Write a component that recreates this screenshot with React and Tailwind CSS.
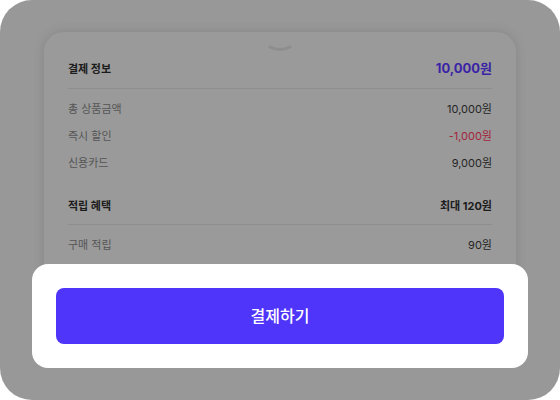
export default function App() {
  const font = { fontFamily: '"Inter", "Noto Sans CJK KR", sans-serif' };
  const Row = ({ label, value, valueClass = "text-[#262626]" }) => (
    <div className="flex h-[27px] items-center justify-between">
      <span className="text-[11px] text-[#555555]">{label}</span>
      <span className={"text-[11px] " + valueClass}>{value}</span>
    </div>
  );
  return (
    <div className="w-[560px] h-[400px] bg-white" style={font}>
      <div className="relative h-full overflow-hidden rounded-[32px] bg-[#989898] px-[44px] pt-[32px]">
        <div className="h-[300px] rounded-[20px] bg-[#9a9a9a] px-6 shadow-[0_0_12px_rgba(0,0,0,0.12)]">
          <div className="flex h-[22px] items-end justify-center">
            <svg width="24" height="8" viewBox="0 0 24 8" className="mb-[1px]">
              <path d="M2 2 Q12 7 22 2" stroke="#8d8d8d" strokeWidth="3" fill="none" strokeLinecap="round" />
            </svg>
          </div>
          <div className="flex h-[30px] items-center justify-between">
            <span className="text-[11px] font-bold text-[#1c1c1c]">결제 정보</span>
            <span className="text-[13px] font-bold text-[#3a24a6]">10,000원</span>
          </div>
          <div className="mt-[4px] h-px bg-[#8e8e8e]" />
          <div className="mt-[7px]">
            <Row label="총 상품금액" value="10,000원" />
            <Row label="즉시 할인" value="-1,000원" valueClass="text-[#a3243a]" />
            <Row label="신용카드" value="9,000원" />
          </div>
          <div className="mt-[14px] flex h-[30px] items-center justify-between">
            <span className="text-[11px] font-bold text-[#1c1c1c]">적립 혜택</span>
            <span className="text-[11px] font-bold text-[#1c1c1c]">최대 120원</span>
          </div>
          <div className="mt-[3px] h-px bg-[#8e8e8e]" />
          <div className="mt-[7px]">
            <Row label="구매 적립" value="90원" />
          </div>
        </div>
        <div className="absolute left-[32px] top-[264px] flex h-[104px] w-[496px] items-center rounded-[16px] bg-white px-6">
          <button className="flex h-[56px] w-full items-center justify-center rounded-[8px] bg-[#4f34fa] text-[16px] font-medium text-white">
            결제하기
          </button>
        </div>
      </div>
    </div>
  );
}
